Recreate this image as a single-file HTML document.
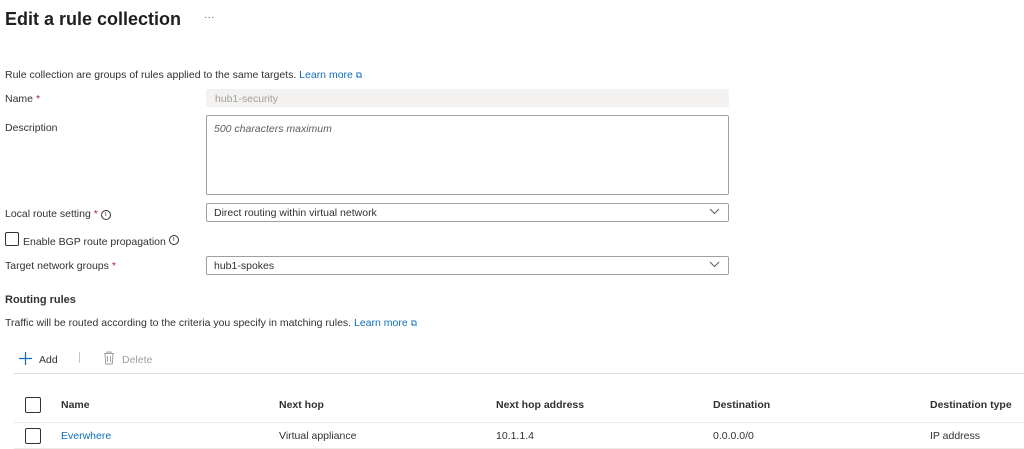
<!DOCTYPE html>
<html><head><meta charset="utf-8"><style>
body{margin:0;width:1024px;height:449px;overflow:hidden;background:#fff;font-family:"Liberation Sans",sans-serif;color:#323130;font-size:10.5px;position:relative}
.a{position:absolute;white-space:nowrap;line-height:13px}
.box{position:absolute;border:1px solid #8a8886;border-radius:2px;box-sizing:border-box;background:#fff}
.l{color:#0f6cbd}
.b{font-weight:bold}
.cb{position:absolute;width:15px;height:15px;border:1px solid #323130;border-radius:2px;box-sizing:border-box}
.hr{position:absolute;left:14px;right:0;height:1px;background:#edebe9}
.chev{position:absolute;right:8px;top:4px}
.info{display:inline-block;width:8px;height:8px;border:1px solid #323130;border-radius:50%;font-size:7px;line-height:8px;text-align:center;vertical-align:1px;margin-left:3px}
</style></head><body>
<div class="a" style="left:5px;top:7px;font-size:18px;line-height:24px;font-weight:bold;color:#201f1e">Edit a rule collection</div>
<div class="a" style="left:204px;top:11px;color:#605e5c">···</div>
<div class="a" style="left:5px;top:69px">Rule collection are groups of rules applied to the same targets. <span class="l">Learn more <span style="font-size:9px">⧉</span></span></div>
<div class="a" style="left:5px;top:93px">Name <span style="color:#a4262c">*</span></div>
<div class="box" style="left:206px;top:89px;width:523px;height:18px;background:#f3f2f1;border:none"></div>
<div class="a" style="left:215px;top:93px;color:#a19f9d">hub1-security</div>
<div class="a" style="left:5px;top:122px">Description</div>
<div class="box" style="left:206px;top:115px;width:523px;height:80px;border-color:#a19f9d"></div>
<div class="a" style="left:214px;top:123px;font-style:italic;color:#605e5c">500 characters maximum</div>
<div class="a" style="left:5px;top:208px">Local route setting <span style="color:#a4262c">*</span><span class="info">i</span></div>
<div class="box" style="left:206px;top:203px;width:523px;height:19px;border-color:#a19f9d"><svg class="chev" width="11" height="7"><path d="M1 1l4.5 4.5L10 1" stroke="#605e5c" fill="none"/></svg></div>
<div class="a" style="left:214px;top:207px">Direct routing within virtual network</div>
<div class="cb" style="left:5px;top:232px;width:14px;height:14px"></div>
<div class="a" style="left:23px;top:235px">Enable BGP route propagation<span class="info" style="vertical-align:4px">i</span></div>
<div class="a" style="left:5px;top:260px">Target network groups <span style="color:#a4262c">*</span></div>
<div class="box" style="left:206px;top:256px;width:523px;height:19px;border-color:#a19f9d"><svg class="chev" width="11" height="7"><path d="M1 1l4.5 4.5L10 1" stroke="#605e5c" fill="none"/></svg></div>
<div class="a" style="left:214px;top:260px">hub1-spokes</div>
<div class="a b" style="left:5px;top:294px;font-size:11px">Routing rules</div>
<div class="a" style="left:5px;top:317px">Traffic will be routed according to the criteria you specify in matching rules. <span class="l">Learn more <span style="font-size:9px">⧉</span></span></div>
<svg style="position:absolute;left:19px;top:352px" width="13" height="13"><path d="M6.5 0v13M0 6.5h13" stroke="#0f6cbd" stroke-width="1.2"/></svg>
<div class="a" style="left:39px;top:354px">Add</div>
<div style="position:absolute;left:79px;top:352px;width:1px;height:11px;background:#c8c6c4"></div>
<svg style="position:absolute;left:103px;top:351px" width="12" height="14"><path d="M1 2.5h10M4 2.5V1h4v1.5M2 2.5l.7 10.5h6.6L10 2.5M4.5 5v6M7.5 5v6" stroke="#a19f9d" fill="none"/></svg>
<div class="a" style="left:122px;top:354px;color:#a19f9d">Delete</div>
<div class="hr" style="top:373px;background:#e1dfdd"></div>
<div class="cb" style="left:25px;top:397px;width:16px;height:16px"></div>
<div class="a b" style="left:61px;top:399px">Name</div>
<div class="a b" style="left:279px;top:399px">Next hop</div>
<div class="a b" style="left:496px;top:399px">Next hop address</div>
<div class="a b" style="left:713px;top:399px">Destination</div>
<div class="a b" style="left:930px;top:399px">Destination type</div>
<div class="hr" style="top:422px"></div>
<div class="cb" style="left:25px;top:428px;width:16px;height:16px"></div>
<div class="a l" style="left:61px;top:430px">Everwhere</div>
<div class="a" style="left:279px;top:430px">Virtual appliance</div>
<div class="a" style="left:496px;top:430px">10.1.1.4</div>
<div class="a" style="left:713px;top:430px">0.0.0.0/0</div>
<div class="a" style="left:930px;top:430px">IP address</div>
<div class="hr" style="top:448px"></div>
</body></html>
